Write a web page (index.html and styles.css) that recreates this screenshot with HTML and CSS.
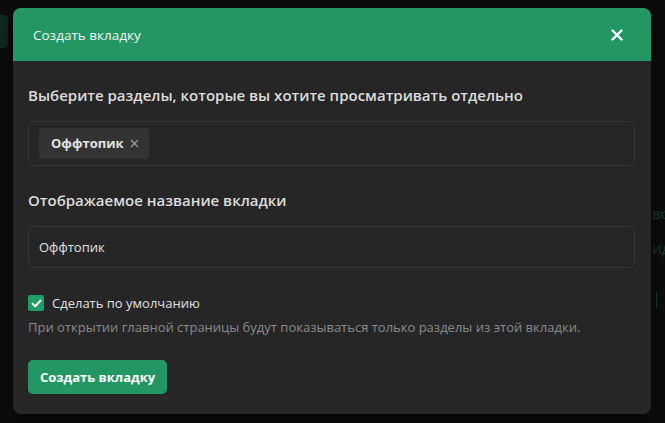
FILE: index.html
```html
<!DOCTYPE html>
<html>
<head>
<title>Создать вкладку</title>
<link rel="stylesheet" href="styles.css">
</head>
<body>

<div class="backdrop">
  <div class="bg-tab"></div>
  <div class="bg-text bg-text-1">во</div>
  <div class="bg-text bg-text-2">ид</div>
  <div class="bg-line"></div>
</div>

<div class="modal">
  <div class="modal-header">
    <span class="modal-title">Создать вкладку</span>
    <svg class="modal-close" width="12" height="12" viewBox="0 0 12 12"><path d="M1.5 1.5 L10.5 10.5 M10.5 1.5 L1.5 10.5" stroke="#fff" stroke-width="2.4" stroke-linecap="round"/></svg>
  </div>

  <div class="modal-body">
    <h3 class="field-title">Выберите разделы, которые вы хотите просматривать отдельно</h3>
    <div class="select-box">
      <span class="tag">Оффтопик
        <svg class="tag-remove" width="9" height="9" viewBox="0 0 9 9"><path d="M1 1 L8 8 M8 1 L1 8" stroke="#9a9a9a" stroke-width="1.3"/></svg>
      </span>
    </div>

    <h3 class="field-title">Отображаемое название вкладки</h3>
    <div class="text-input">Оффтопик</div>

    <label class="check-row">
      <span class="checkbox">
        <svg width="11" height="9" viewBox="0 0 11 9"><path d="M1.5 4.6 L4.2 7.2 L9.5 1.6" fill="none" stroke="#fff" stroke-width="2" stroke-linecap="round" stroke-linejoin="round"/></svg>
      </span>
      Сделать по умолчанию
    </label>
    <p class="hint">При открытии главной страницы будут показываться только разделы из этой вкладки.</p>

    <button class="btn-create">Создать вкладку</button>
  </div>
</div>

</body>
</html>
```

FILE: styles.css
```css
body {
  margin: 0;
  height: 423px;
  background: #0c0c0c;
  font-family: 'Open Sans', 'Noto Sans', sans-serif;
  overflow: hidden;
  position: relative;
}

.backdrop {
  position: absolute;
  inset: 0;
}

.bg-tab {
  position: absolute;
  left: 0;
  top: 15px;
  width: 8px;
  height: 33px;
  background: #0f2a1e;
  border-radius: 0 4px 4px 0;
}

.bg-text {
  position: absolute;
  left: 652px;
  color: #0f3d2a;
  font-size: 15px;
}

.bg-text-1 { top: 203px; }
.bg-text-2 { top: 238px; }

.bg-line {
  position: absolute;
  left: 656px;
  top: 292px;
  width: 1px;
  height: 16px;
  background: #0f3d2a;
}

.modal {
  position: absolute;
  left: 13px;
  top: 8px;
  width: 638px;
  height: 406px;
  background: #262626;
  border-radius: 8px;
  overflow: hidden;
  box-shadow: 0 4px 16px rgba(0, 0, 0, 0.6);
}

.modal-header {
  height: 53px;
  background: #229764;
  display: flex;
  align-items: center;
  justify-content: space-between;
  padding: 0 28px 0 20px;
  color: #f2f2f2;
}

.modal-title {
  font-size: 13.5px;
}

.modal-body {
  padding: 24px 16px 0 15px;
}

.field-title {
  margin: 0 0 16px;
  font-size: 15px;
  font-weight: 600;
  color: #dcdcdc;
}

.select-box {
  height: 43px;
  border: 1px solid #363636;
  border-radius: 6px;
  display: flex;
  align-items: center;
  padding: 0 10px;
  margin-bottom: 24px;
}

.tag {
  display: flex;
  align-items: center;
  gap: 6px;
  background: #333333;
  border-radius: 3px;
  padding: 6px 10px 7px 12px;
  font-size: 13px;
  font-weight: bold;
  color: #e2e2e2;
}

.text-input {
  height: 40px;
  border: 1px solid #363636;
  border-radius: 6px;
  display: flex;
  align-items: center;
  padding: 0 10px;
  font-size: 13px;
  color: #e2e2e2;
  margin-bottom: 26px;
}

.check-row {
  display: flex;
  align-items: center;
  gap: 8px;
  font-size: 13px;
  color: #e0e0e0;
}

.checkbox {
  width: 16px;
  height: 16px;
  border-radius: 2px;
  background: #1e9e64;
  display: flex;
  align-items: center;
  justify-content: center;
}

.hint {
  margin: 6px 0 24px;
  font-size: 13px;
  color: #8a8a8a;
}

.btn-create {
  height: 34px;
  padding: 0 12px;
  border: none;
  border-radius: 5px;
  background: #229764;
  color: #fff;
  font-family: inherit;
  font-size: 13px;
  font-weight: bold;
}
```
